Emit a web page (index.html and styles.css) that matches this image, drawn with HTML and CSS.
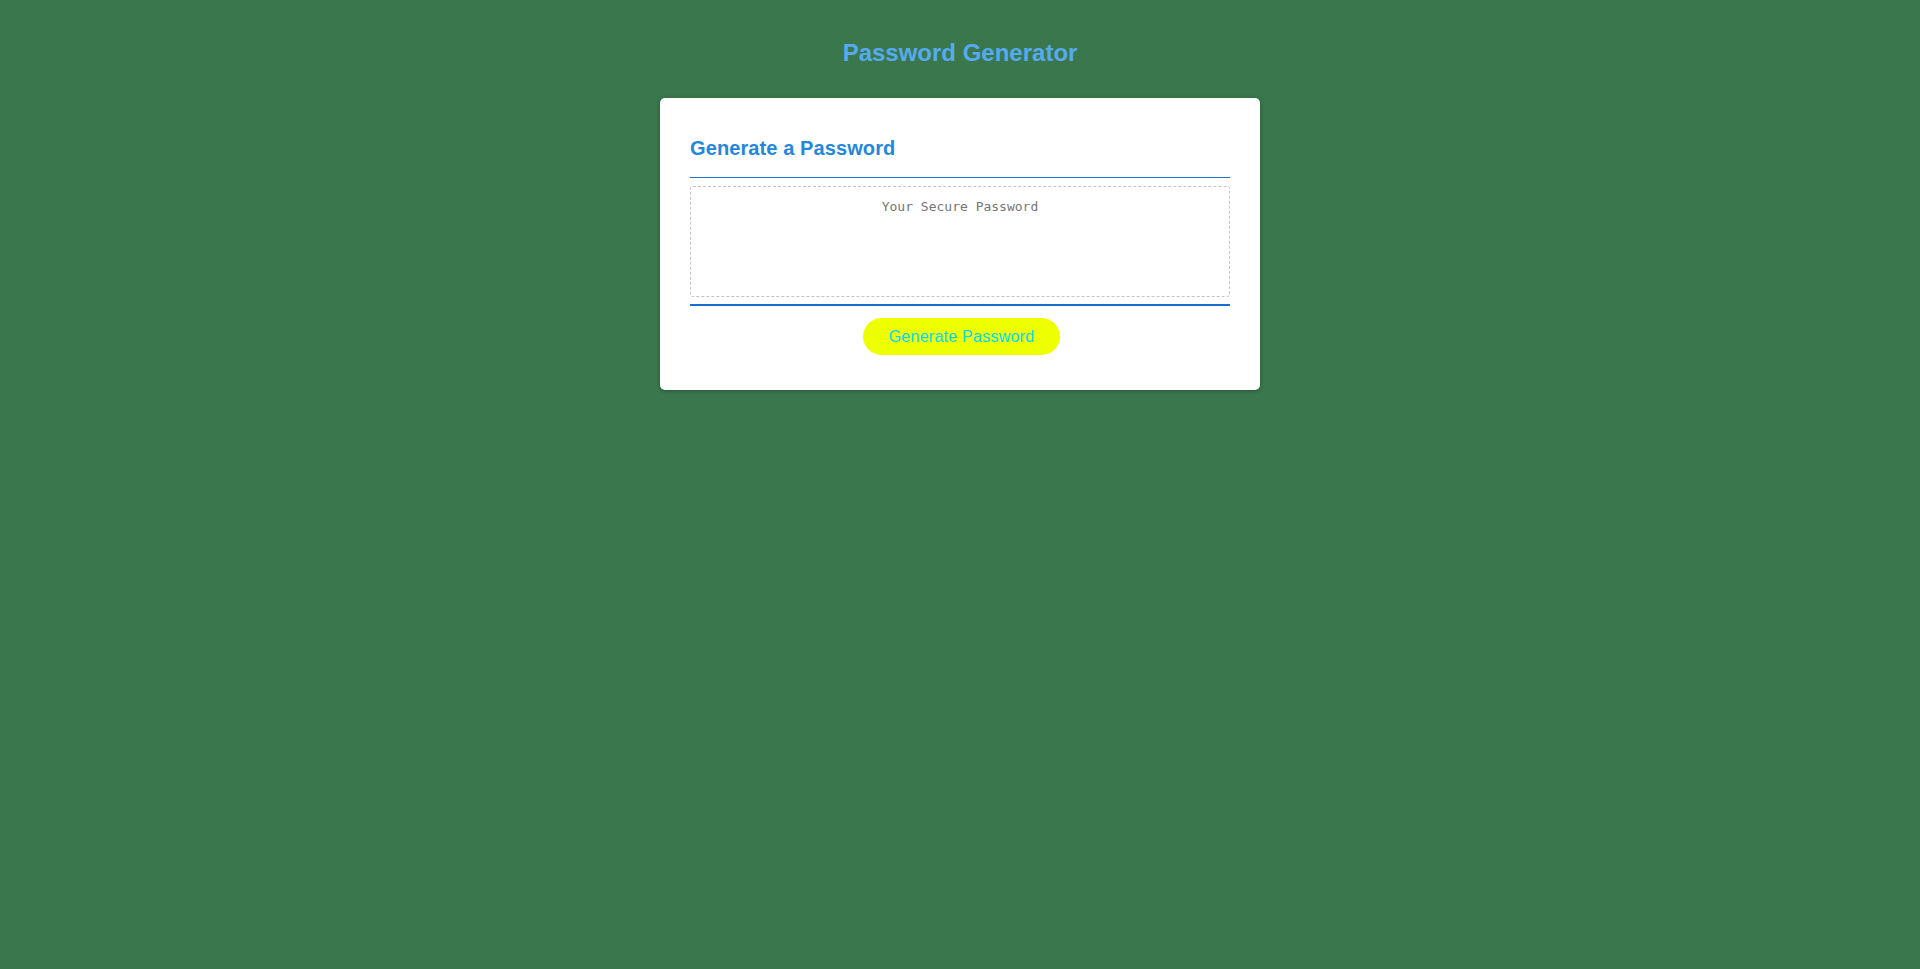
FILE: index.html
```
<!DOCTYPE html>
<html lang="en">
<head>
<meta charset="UTF-8">
<title>Password Generator</title>
<link rel="stylesheet" href="styles.css">
</head>
<body>
<div class="wrapper">
  <header class="page-header">
    <h1 class="page-title">Password Generator</h1>
  </header>
  <div class="card">
    <div class="card-header">
      <h2 class="card-title">Generate a Password</h2>
    </div>
    <div class="card-body">
      <textarea readonly class="password-box" placeholder="Your Secure Password" aria-label="Generated Password"></textarea>
    </div>
    <div class="card-footer">
      <button class="btn">Generate Password</button>
    </div>
  </div>
</div>
</body>
</html>
```
FILE: styles.css
```
html, body {
  margin: 0;
  padding: 0;
  height: 100%;
}
body {
  background: #3a774d;
  font-family: "Liberation Sans", Arial, sans-serif;
}
.wrapper {
  display: flex;
  flex-direction: column;
  align-items: center;
  padding-top: 39px;
}
.page-header {
  text-align: center;
}
.page-title {
  margin: 0;
  font-size: 24px;
  line-height: 28px;
  font-weight: bold;
  color: #56abef;
}
.card {
  margin-top: 31px;
  width: 600px;
  box-sizing: border-box;
  background: #fff;
  border-radius: 5px;
  box-shadow: 0 1px 4px rgba(0, 0, 0, 0.3);
  padding: 30px 30px 35px;
}
.card-header {
  padding: 8px 0 17px;
  border-bottom: 1px solid #1f73cc;
}
.card-title {
  margin: 0;
  font-size: 20px;
  line-height: 24px;
  font-weight: bold;
  color: #2487dc;
  letter-spacing: 0.1px;
}
.card-body {
  padding: 8px 0 7px;
}
.password-box {
  display: block;
  width: 100%;
  height: 111px;
  box-sizing: border-box;
  margin: 0;
  padding: 12px;
  border: 1px dashed #c4c4c4;
  border-radius: 3px;
  font-family: "DejaVu Sans Mono", monospace;
  font-size: 13px;
  text-align: center;
  resize: none;
  outline: none;
  color: #333;
}
.password-box::placeholder {
  color: #757575;
}
.card-footer {
  border-top: 2px solid #1a6fcc;
  padding-top: 12px;
  display: flex;
  justify-content: center;
}
.btn {
  width: 197px;
  height: 37px;
  margin-left: 3px;
  border: none;
  border-radius: 19px;
  background: #eeff00;
  color: #00dcff;
  font-family: "Liberation Sans", Arial, sans-serif;
  font-size: 16px;
  line-height: 36px;
  letter-spacing: 0.25px;
  padding: 0;
  cursor: pointer;
}
```
